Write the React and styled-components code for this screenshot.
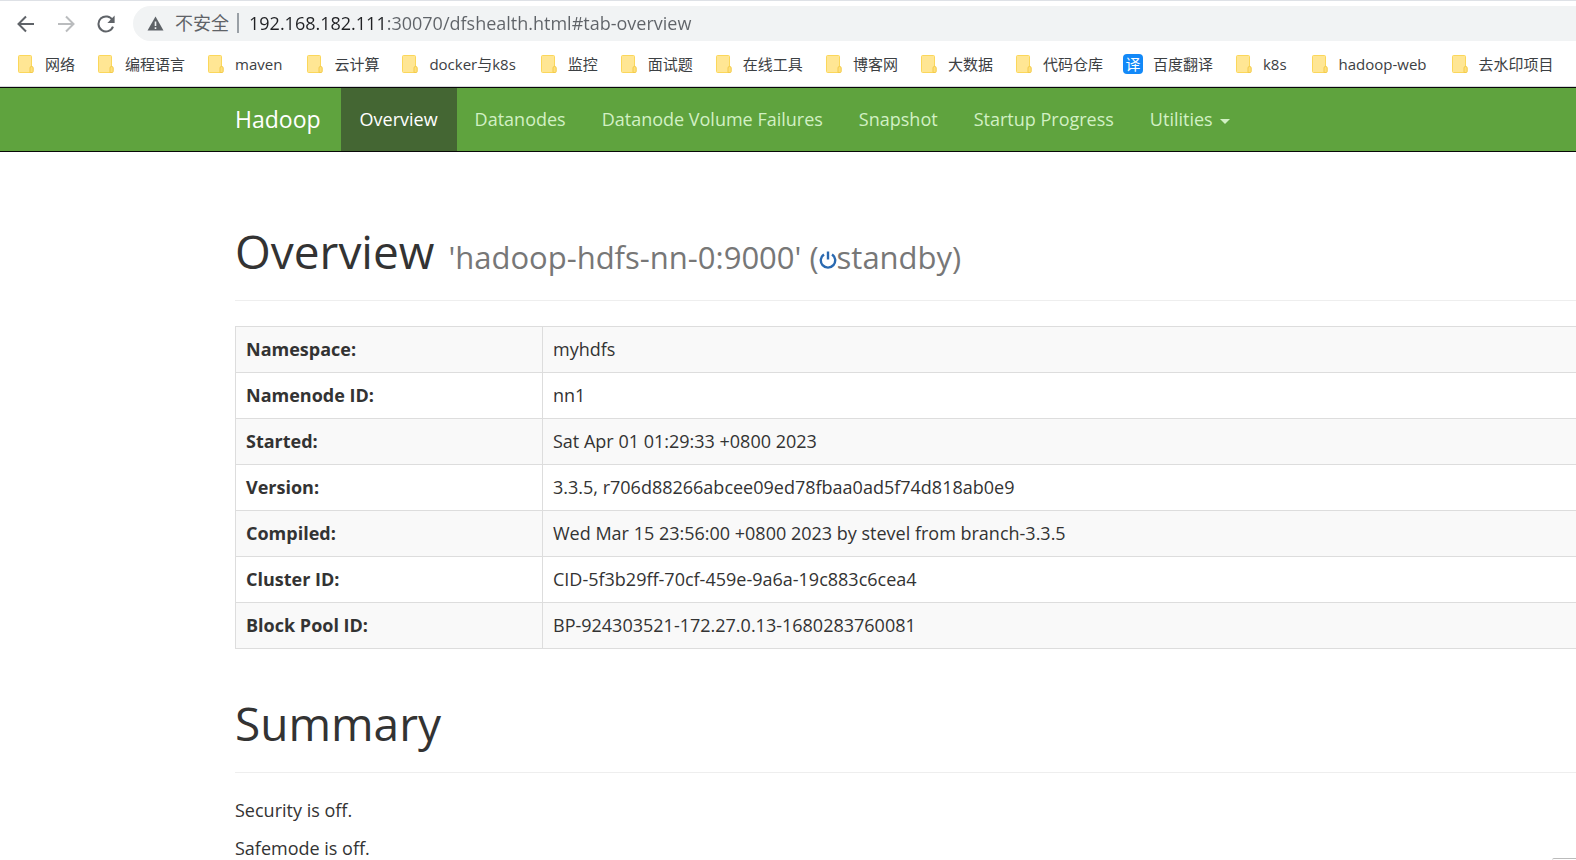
import styled, { createGlobalStyle } from "styled-components";

const GlobalStyle = createGlobalStyle`

  * {
    box-sizing: border-box;
  }

  body {
    margin: 0;
    overflow-x: hidden;
    background: #fff;
    color: #333;
    font-family: 'Open Sans', 'Noto Sans CJK SC', sans-serif;
    font-size: 18px;
    line-height: 25px;
  }
`

const Toolbar = styled.header`

  height: 44px;
  padding: 5px 0 3px 14px;
  display: flex;
  align-items: center;
  border-top: 1px solid #dee1e6;
`

const ToolButton = styled.button`

  width: 24px;
  height: 24px;
  margin-right: 16px;
  padding: 0;
  flex: none;
  display: grid;
  place-items: center;
  border: 0;
  background: none;
  color: ${({ disabled }) => (disabled ? "#babcbe" : "#5f6368")};
`

const AddressBar = styled.div`

  height: 35px;
  flex: 1;
  margin-left: -1px;
  padding: 0 0 2px 14px;
  display: flex;
  align-items: center;
  border-radius: 18px 0 0 18px;
  background: #f1f3f4;
  color: #5f6368;

  svg{
    margin-top: 2px;
  }

  label{
    margin-left: 11px;
    padding-right: 8px;
    border-right: 2px solid #9aa0a6;
    line-height: 20px;
  }
`

/* host part is darker than the rest of the url */
const UrlInput = styled.input`

  flex: 1;
  min-width: 0;
  height: 30px;
  margin-left: 10px;
  padding: 0;
  border: 0;
  outline: 0;
  font: inherit;
  color: #5f6368;
  background: linear-gradient(90deg, #202124 136px, #5f6368 136px);
  -webkit-background-clip: text;
  background-clip: text;
  -webkit-text-fill-color: transparent;
`

const Bookmarks = styled.nav`

  height: 43px;
  padding: 0 0 2px 18px;
  display: flex;
  align-items: center;
  gap: 23px;
  overflow: hidden;
  border-bottom: 1px solid #d5d7da;
`

const Bookmark = styled.a`

  display: flex;
  align-items: center;
  flex: none;
  gap: ${({ $badge }) => ($badge ? "10px" : "11px")};
  margin-left: ${({ $badge }) => ($badge ? "-3px" : "0")};
  padding-right: ${({ $latin }) => ($latin ? "2px" : "0")};
  color: #3c4043;
  font-size: 15px;
  line-height: 20px;
  text-decoration: none;
`

const TranslateBadge = styled.span`

  width: 20px;
  height: 20px;
  display: grid;
  place-items: center;
  border-radius: 4px;
  background: #1389f8;
  color: #fff;
  line-height: 20px;
`

const Navbar = styled.nav`

  height: 65px;
  padding-left: 235px;
  display: flex;
  border: solid #080808;
  border-width: 1px 0;
  background: #5fa33e;
`

const Brand = styled.a`

  padding: 19px 20px 19px 0;
  color: #fff;
  font-size: 23px;
  text-decoration: none;
`

const NavLink = styled.a`

  padding: 19px ${({ $active }) => ($active ? "19px" : "18px")};
  display: flex;
  align-items: center;
  gap: 7px;
  white-space: nowrap;
  color: ${({ $active }) => ($active ? "#fff" : "#d2f0c4")};
  background: ${({ $active }) => ($active ? "#446633" : "transparent")};
  text-decoration: none;
`

const Caret = styled.span`

  margin-top: 4px;
  border: 5px solid transparent;
  border-top-color: currentColor;
  border-bottom: 0;
`

const Content = styled.main`

  padding: 73px 0 0 235px;
`

const PageHeader = styled.h1`

  margin: 0 0 25px;
  padding-bottom: 23px;
  border-bottom: 1px solid #eee;
  font-size: 46px;
  font-weight: 400;
  line-height: 52px;

  small{
    margin-left: 2px;
    color: #777;
    font-size: 31px;
    line-height: 1;
  }
`

const InfoTable = styled.table`

  width: 100%;
  margin-bottom: 48px;
  border-collapse: collapse;
  border: 1px solid #ddd;
  border-right: 0;

  tr:nth-child(odd){
    background: #f9f9f9;
  }

  th, td{
    height: 46px;
    padding: 10px;
    border: 1px solid #ddd;
    border-right: 0;
    text-align: left;
  }

  th{
    width: 307px;
    font-weight: 700;
  }
`

const Status = styled.p`

  margin: 0 0 13px;
`

const StatusBubble = styled.div`

  position: fixed;
  right: 0;
  bottom: 0;
  width: 24px;
  height: 2px;
  border-top: 1px solid #bbb;
  border-left: 1px solid #ddd;
  border-top-left-radius: 3px;
`

const bookmarks = [
  "网络", "编程语言", "maven", "云计算", "docker与k8s", "监控", "面试题", "在线工具",
  "博客网", "大数据", "代码仓库", "百度翻译", "k8s", "hadoop-web", "去水印项目"
];

const tabs = ["Overview", "Datanodes", "Datanode Volume Failures", "Snapshot", "Startup Progress"];

const info = [
  ["Namespace:", "myhdfs"],
  ["Namenode ID:", "nn1"],
  ["Started:", "Sat Apr 01 01:29:33 +0800 2023"],
  ["Version:", "3.3.5, r706d88266abcee09ed78fbaa0ad5f74d818ab0e9"],
  ["Compiled:", "Wed Mar 15 23:56:00 +0800 2023 by stevel from branch-3.3.5"],
  ["Cluster ID:", "CID-5f3b29ff-70cf-459e-9a6a-19c883c6cea4"],
  ["Block Pool ID:", "BP-924303521-172.27.0.13-1680283760081"]
];

function FolderIcon() {

  return (
    <svg width="16" height="18" viewBox="0 0 16 18">
      <rect x="0.5" y="0.5" width="13" height="17" rx="1" fill="#ffe694" stroke="#fbd75b"/>
      <path d="M12 17.5V13a1.6 1.6 0 0 1 3.2 0v3.5a1 1 0 0 1-1 1z" fill="#ffe07a" stroke="#f3cb4c"/>
    </svg>
  )
}

function ArrowIcon({ forward }) {

  return (
    <svg width="18" height="18" viewBox="0 0 18 18" fill="none" stroke="currentColor" strokeWidth="2">
      <path d={forward ? "M1 9h15M9 1.5L16.5 9L9 16.5" : "M17 9H2M9 1.5L1.5 9L9 16.5"}/>
    </svg>
  )
}

function ReloadIcon() {

  return (
    <svg width="18" height="18" viewBox="0 0 18 18">
      <path d="M15.6 5.4A7.5 7.5 0 1 0 16 11.6" fill="none" stroke="currentColor" strokeWidth="2"/>
      <path d="M17.6 0.6V8H10.4z" fill="currentColor"/>
    </svg>
  )
}

function WarningIcon() {

  return (
    <svg width="17" height="15" viewBox="0 0 17 15">
      <path d="M8.5 0.5L16.5 14.5H0.5z" fill="#5f6368"/>
      <path d="M8.5 5.5V10M8.5 11.2V13" stroke="#f1f3f4" strokeWidth="1.6"/>
    </svg>
  )
}

function PowerIcon() {

  return (
    <svg width="18" height="18" viewBox="0 0 18 18" fill="none" stroke="#2a69b0" strokeWidth="2.4">
      <path d="M5 3.4A7.2 7.2 0 1 0 13 3.4"/>
      <path d="M9 0.5V8.5"/>
    </svg>
  )
}

function App() {

  return (
    <>
      <GlobalStyle/>

      <Toolbar>
        <ToolButton aria-label="Back"><ArrowIcon/></ToolButton>
        <ToolButton aria-label="Forward" disabled><ArrowIcon forward/></ToolButton>
        <ToolButton aria-label="Reload"><ReloadIcon/></ToolButton>
        <AddressBar>
          <WarningIcon/>
          <label htmlFor="url">不安全</label>
          <UrlInput id="url" type="text" defaultValue="192.168.182.111:30070/dfshealth.html#tab-overview"/>
        </AddressBar>
      </Toolbar>

      <Bookmarks>
        {
          bookmarks.map((name) => (
            <Bookmark key={name} href="#" $badge={name === "百度翻译"} $latin={/[a-z]/.test(name)}>
              {name === "百度翻译" ? <TranslateBadge>译</TranslateBadge> : <FolderIcon/>}
              {name}
            </Bookmark>
          ))
        }
      </Bookmarks>

      <Navbar>
        <Brand href="#">Hadoop</Brand>
        {
          tabs.map((tab) => <NavLink key={tab} href="#" $active={tab === "Overview"}>{tab}</NavLink>)
        }
        <NavLink href="#">Utilities<Caret/></NavLink>
      </Navbar>

      <Content>
        <PageHeader>
          Overview <small>'hadoop-hdfs-nn-0:9000' (<PowerIcon/>standby)</small>
        </PageHeader>

        <InfoTable>
          <tbody>
            {
              info.map(([label, value]) => (
                <tr key={label}>
                  <th scope="row">{label}</th>
                  <td>{value}</td>
                </tr>
              ))
            }
          </tbody>
        </InfoTable>

        <PageHeader>Summary</PageHeader>
        <Status>Security is off.</Status>
        <Status>Safemode is off.</Status>
      </Content>

      <StatusBubble/>
    </>
  )
}

export default App;
